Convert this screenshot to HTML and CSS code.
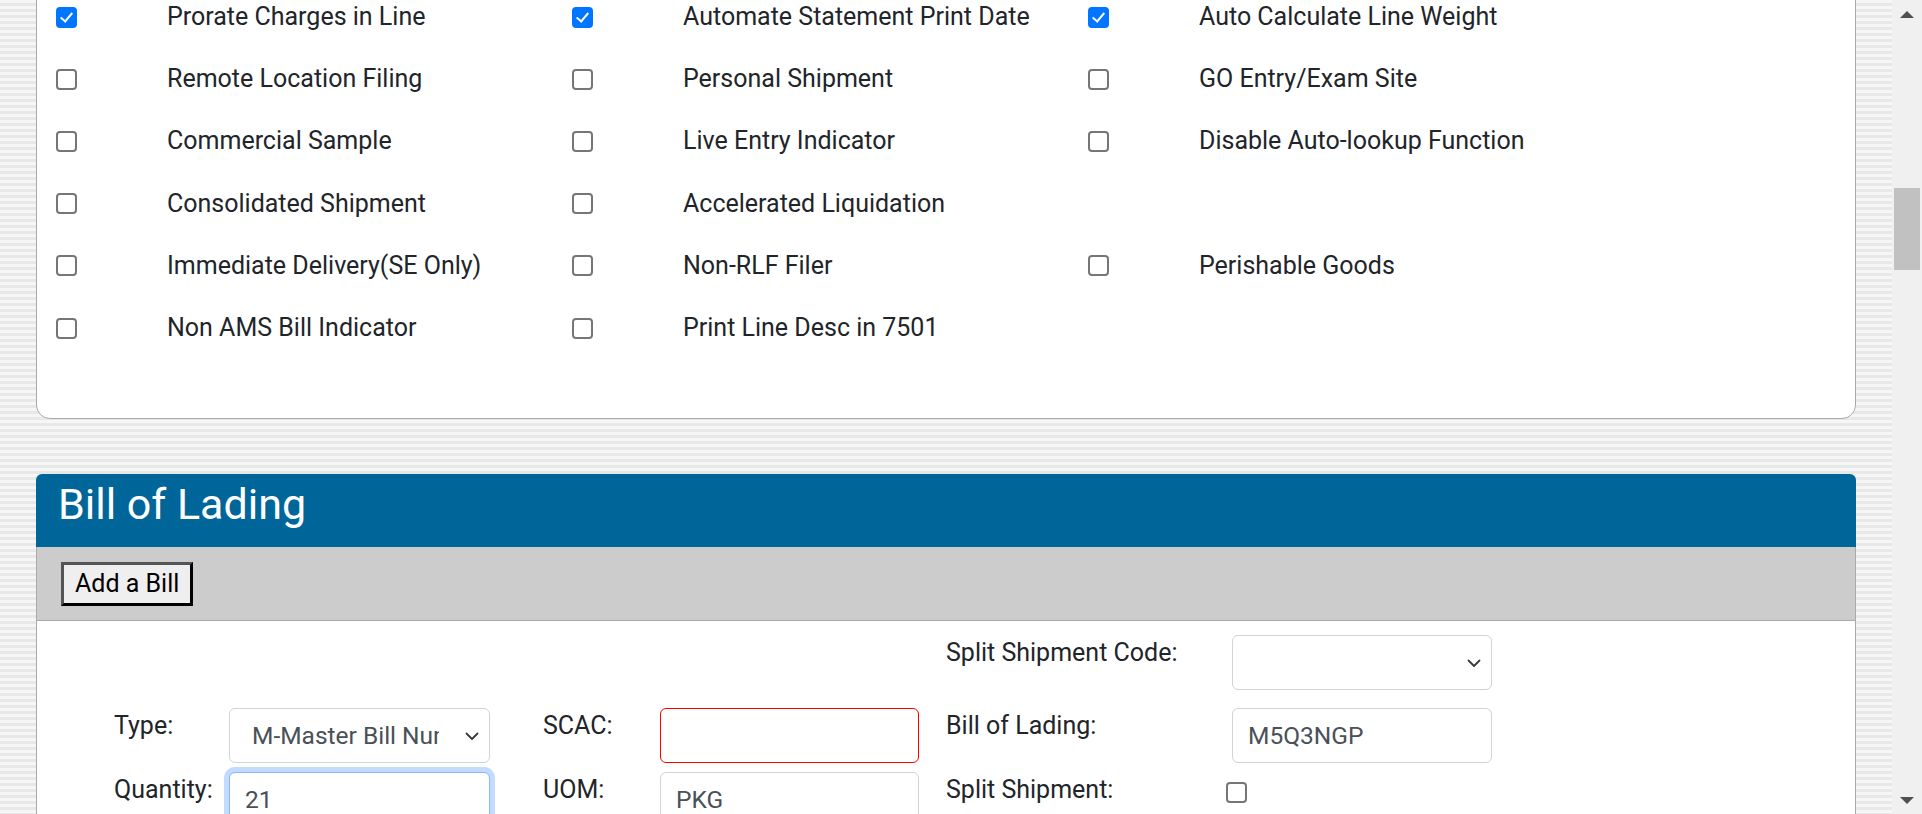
FILE: index.html
```html
<!DOCTYPE html>
<html lang="en">
<head>
<meta charset="utf-8">
<title>Entry</title>
<link rel="stylesheet" href="styles.css">
</head>
<body>
<div class="screen">
  <main class="viewport">
    <section class="card options">
      <div class="opt-grid">
        <input class="cb" type="checkbox" checked><span class="opt-label">Prorate Charges in Line</span>
        <input class="cb" type="checkbox" checked><span class="opt-label">Automate Statement Print Date</span>
        <input class="cb" type="checkbox" checked><span class="opt-label">Auto Calculate Line Weight</span>

        <input class="cb" type="checkbox"><span class="opt-label">Remote Location Filing</span>
        <input class="cb" type="checkbox"><span class="opt-label">Personal Shipment</span>
        <input class="cb" type="checkbox"><span class="opt-label">GO Entry/Exam Site</span>

        <input class="cb" type="checkbox"><span class="opt-label">Commercial Sample</span>
        <input class="cb" type="checkbox"><span class="opt-label">Live Entry Indicator</span>
        <input class="cb" type="checkbox"><span class="opt-label">Disable Auto-lookup Function</span>

        <input class="cb" type="checkbox"><span class="opt-label">Consolidated Shipment</span>
        <input class="cb" type="checkbox"><span class="opt-label">Accelerated Liquidation</span>
        <span class="opt-empty"></span><span class="opt-empty"></span>

        <input class="cb" type="checkbox"><span class="opt-label">Immediate Delivery(SE Only)</span>
        <input class="cb" type="checkbox"><span class="opt-label">Non-RLF Filer</span>
        <input class="cb" type="checkbox"><span class="opt-label">Perishable Goods</span>

        <input class="cb" type="checkbox"><span class="opt-label">Non AMS Bill Indicator</span>
        <input class="cb" type="checkbox"><span class="opt-label">Print Line Desc in 7501</span>
        <span class="opt-empty"></span><span class="opt-empty"></span>
      </div>
    </section>

    <section class="panel">
      <h2 class="panel-title">Bill of Lading</h2>
      <div class="toolbar"><button class="btn" type="button">Add a Bill</button></div>
      <div class="form">
        <div class="form-row row-first">
          <label class="f-label col-l3">Split Shipment Code:</label>
          <div class="select-wrap col-f3">
            <select class="f-select"><option></option></select>
            <svg class="chev" width="14" height="9" viewBox="0 0 14 9"><path d="M1.5 1.5 L7 7 L12.5 1.5" fill="none" stroke="#343a40" stroke-width="1.8" stroke-linecap="round" stroke-linejoin="round"/></svg>
          </div>
        </div>
        <div class="form-row row-mid">
          <label class="f-label col-l1">Type:</label>
          <div class="select-wrap col-f1">
            <select class="f-select"><option>M-Master Bill Number</option></select>
            <svg class="chev" width="14" height="9" viewBox="0 0 14 9"><path d="M1.5 1.5 L7 7 L12.5 1.5" fill="none" stroke="#343a40" stroke-width="1.8" stroke-linecap="round" stroke-linejoin="round"/></svg>
          </div>
          <label class="f-label col-l2">SCAC:</label>
          <input class="f-input invalid col-f2" type="text" value="">
          <label class="f-label col-l3">Bill of Lading:</label>
          <input class="f-input col-f3" type="text" value="M5Q3NGP">
        </div>
        <div class="form-row">
          <label class="f-label col-l1">Quantity:</label>
          <input class="f-input focused col-f1" type="text" value="21">
          <label class="f-label col-l2">UOM:</label>
          <input class="f-input col-f2" type="text" value="PKG">
          <label class="f-label col-l3">Split Shipment:</label>
          <div class="col-f3"><input class="cb cb-split" type="checkbox"></div>
        </div>
      </div>
    </section>
  </main>

  <div class="scrollbar">
    <div class="sb-btn"><span class="tri-up"></span></div>
    <div class="sb-track"><div class="sb-thumb"></div></div>
    <div class="sb-btn sb-btn-down"><span class="tri-down"></span></div>
  </div>
</div>
</body>
</html>
```

FILE: styles.css
```css
html, body {
  margin: 0;
  padding: 0;
  height: 100%;
  overflow: hidden;
}

body {
  font-family: Roboto, "Liberation Sans", sans-serif;
  color: #212529;
}

.screen {
  display: flex;
  height: 100vh;
}

.viewport {
  flex: 1;
  overflow: hidden;
  padding: 0 36px 0 36px;
  background: repeating-linear-gradient(to bottom, #f6f6f6 0, #f6f6f6 3px, #e8e8e8 3px, #e8e8e8 6px);
}

/* ---------- options card (scrolled, top cut off) ---------- */
.card {
  background: #fff;
  border: 1px solid #a9a9a9;
  border-radius: 14px;
}

.options {
  margin-top: -40px;
  padding: 25px 0 59px 20px;
}

.opt-grid {
  display: grid;
  grid-template-columns: 110px 406px 110px 406px 110px 406px;
  grid-auto-rows: 62.2px;
  align-items: center;
}

.cb {
  appearance: none;
  -webkit-appearance: none;
  box-sizing: border-box;
  position: relative;
  width: 21px;
  height: 21px;
  margin: 0;
  border: 2px solid #767676;
  border-radius: 4px;
  background: #fff;
}

.cb:checked {
  background: #0075ff;
  border-color: #0075ff;
}

.cb:checked::after {
  content: "";
  position: absolute;
  left: 5px;
  top: 1px;
  width: 5px;
  height: 10px;
  border-right: 2.8px solid #fff;
  border-bottom: 2.8px solid #fff;
  transform: rotate(40deg);
}

.opt-grid .cb {
  margin-left: -1px;
}

.opt-label {
  font-size: 25px;
  line-height: 1.2;
  white-space: nowrap;
}

/* ---------- bill of lading panel ---------- */
.panel {
  margin-top: 55px;
}

.panel-title {
  margin: 0;
  background: #006699;
  color: #fff;
  font-weight: 400;
  font-size: 43px;
  line-height: 1.2;
  padding: 5px 22px 16px;
  border-radius: 6px 6px 0 0;
}

.toolbar {
  background: #cccccc;
  border-left: 1px solid #a9a9a9;
  border-right: 1px solid #a9a9a9;
  border-bottom: 1px solid #a9a9a9;
  padding: 15px 24px 14px;
}

.btn {
  font-family: Roboto, "Liberation Sans", sans-serif;
  font-size: 25px;
  line-height: 1.2;
  color: #000;
  background: #efefef;
  border: 3px solid;
  border-color: #555 #000 #000 #555;
  padding: 4px 11px;
  margin: 0;
}

.form {
  background: #fff;
  border-left: 1px solid #a9a9a9;
  border-right: 1px solid #a9a9a9;
  padding: 14px 0 40px 77px;
  height: 400px;
}

.form-row {
  display: grid;
  grid-template-columns: 115px 261px 53px 117px 259px 27px 286px 260px;
  align-items: start;
  margin-bottom: 9px;
}

.row-first { margin-bottom: 18px; }

.col-l1 { grid-column: 1; }
.col-f1 { grid-column: 2; }
.col-l2 { grid-column: 4; }
.col-f2 { grid-column: 5; }
.col-l3 { grid-column: 7; }
.col-f3 { grid-column: 8; }

.f-label {
  font-size: 25px;
  line-height: 36px;
  white-space: nowrap;
}

.f-input,
.f-select {
  box-sizing: border-box;
  width: 100%;
  height: 55px;
  border: 1px solid #ced4da;
  border-radius: 6px;
  background: #fff;
  color: #495057;
  font-family: Roboto, "Liberation Sans", sans-serif;
  font-size: 24.5px;
  margin: 0;
  outline: none;
}

.f-input {
  padding: 0 15px;
}

.f-input.invalid {
  border-color: #ff0000;
}

.f-input.focused {
  border-color: #86b7fe;
  box-shadow: 0 0 0 5px rgba(13, 110, 253, 0.25);
}

.select-wrap {
  position: relative;
}

.f-select {
  appearance: none;
  -webkit-appearance: none;
  padding: 0 50px 0 22px;
}

.chev {
  position: absolute;
  right: 11px;
  top: 24px;
  pointer-events: none;
}

.cb-split {
  margin: 10px 0 0 -6px;
}

/* ---------- fake scrollbar ---------- */
.scrollbar {
  width: 30px;
  background: #f0f0f0;
  display: flex;
  flex-direction: column;
}

.sb-btn {
  height: 28px;
  display: flex;
  justify-content: center;
  align-items: center;
}

.tri-up {
  width: 0;
  height: 0;
  border-left: 7px solid transparent;
  border-right: 7px solid transparent;
  border-bottom: 7px solid #505050;
}

.tri-down {
  width: 0;
  height: 0;
  border-left: 7px solid transparent;
  border-right: 7px solid transparent;
  border-top: 7px solid #505050;
}

.sb-track {
  flex: 1;
  padding: 0 2px;
}

.sb-thumb {
  margin-top: 160px;
  height: 82px;
  background: #c1c1c1;
}
```
